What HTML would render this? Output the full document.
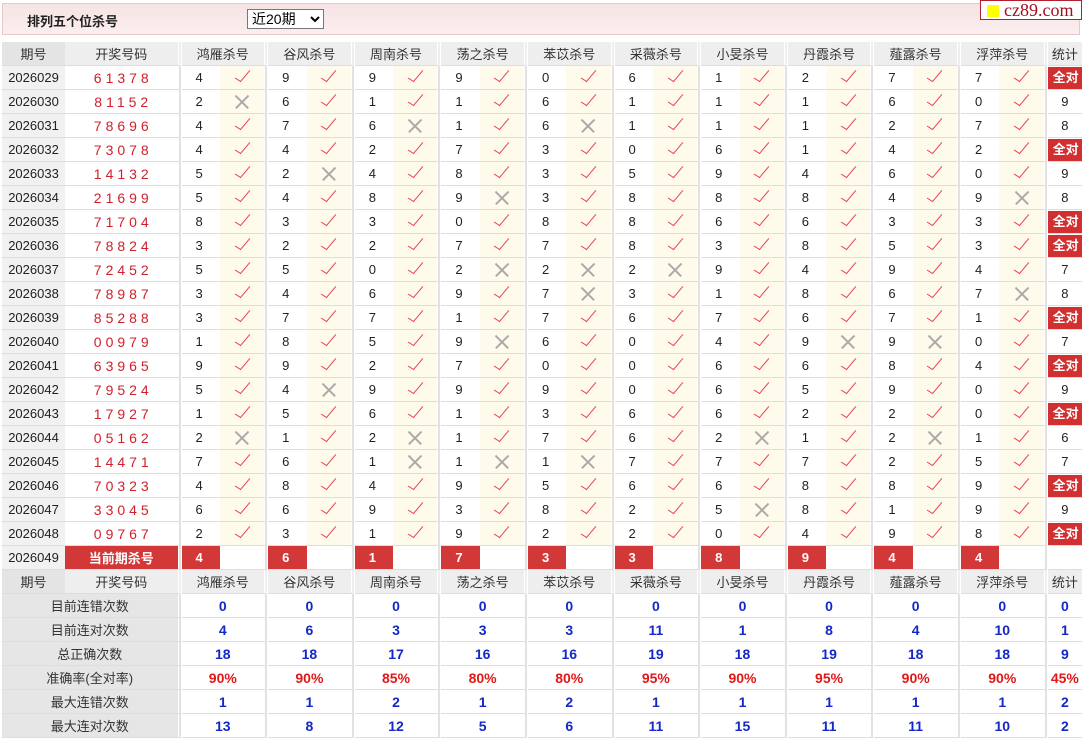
<!DOCTYPE html>
<html><head><meta charset="utf-8">
<style>
body{margin:0;background:#fff;font-family:"Liberation Sans","Noto Sans CJK SC",sans-serif;font-size:13px;color:#222;width:1085px;height:739px;overflow:hidden;position:relative}
.top{position:absolute;left:2px;top:3px;width:1078px;height:32px;background:linear-gradient(#f7e3e4,#fbeeee);border:1px solid #e8c8c8;box-sizing:border-box}
.top .t{position:absolute;left:24px;top:7px;font-weight:bold;font-size:13px}
.top select{position:absolute;left:244px;top:5px;width:77px;height:20px;font-size:14px;font-family:"Liberation Sans","Noto Sans CJK SC",sans-serif;background:#fff;border:1px solid #777}
.logo{position:absolute;left:980px;top:0;width:102px;height:20px;background:#fff;border:1px solid #b02030;box-sizing:border-box;font-family:"Liberation Serif",serif;font-size:18px;color:#a01020;line-height:18px;padding-left:23px}
.logo:before{content:"";position:absolute;left:6px;top:4px;width:12px;height:12px;background:#ff0}
table{position:absolute;left:2px;top:42px;border-collapse:collapse;table-layout:fixed;width:1080px}
td{height:23px;padding:0;border-bottom:1px solid #ddd;text-align:center;white-space:nowrap;overflow:hidden}
tr.h td{background:#eee;color:#333}
tr.h td.p{background:#e4e4e4}
td.s{background:#e2e2e2;border-bottom:none;border-left:1px solid #fff;border-right:1px solid #fff}
td.p{background:#f1f1f1}
td.n{color:#d0202c;letter-spacing:4px;font-size:14px;padding-left:4px}
td.v{text-align:left;padding-left:14px;font-size:13px}
td.k{background:#fffbec;position:relative}
b.y{display:inline-block;width:6px;height:14px;border-right:1.6px solid #ea4050;border-bottom:1.6px solid #ea4050;transform:rotate(40deg) skewY(-8deg);margin-top:-5px}
b.x{display:inline-block;position:relative;width:16px;height:16px;vertical-align:middle}
b.x:before,b.x:after{content:"";position:absolute;left:-1px;top:7px;width:18px;height:1.5px;background:#aaa;transform:rotate(45deg)}
b.x:after{transform:rotate(-45deg)}
td.st{font-size:13px}
.q{display:inline-block;background:#d23030;color:#fff;font-weight:bold;padding:0 3px;line-height:22px;width:30px}
tr.c td.r{background:#d23838;color:#fff;font-weight:bold;text-align:left;padding-left:14px}
tr.c td.rr{background:#d23838;color:#fff;font-weight:bold}
tr.m td{font-weight:bold;color:#1428c8;font-size:14px}
tr.m td.l{background:#e6e6e6;color:#333;font-weight:normal;font-size:13px}
tr.m td.rd{color:#e01818}
</style></head><body>
<div class="top"><span class="t">排列五个位杀号</span><select><option>近20期</option></select></div>
<div class="logo">cz89.com</div>
<table>
<colgroup><col style="width:63px"><col style="width:113px">
<col style="width:3px"><col style="width:39px"><col style="width:44.6px">
<col style="width:3px"><col style="width:39px"><col style="width:44.6px">
<col style="width:3px"><col style="width:39px"><col style="width:44.6px">
<col style="width:3px"><col style="width:39px"><col style="width:44.6px">
<col style="width:3px"><col style="width:39px"><col style="width:44.6px">
<col style="width:3px"><col style="width:39px"><col style="width:44.6px">
<col style="width:3px"><col style="width:39px"><col style="width:44.6px">
<col style="width:3px"><col style="width:39px"><col style="width:44.6px">
<col style="width:3px"><col style="width:39px"><col style="width:44.6px">
<col style="width:3px"><col style="width:39px"><col style="width:44.6px">
<col style="width:3px"><col style="width:35px"></colgroup>
<tr class="h"><td class="p">期号</td><td>开奖号码</td><td class="s"></td><td colspan="2">鸿雁杀号</td><td class="s"></td><td colspan="2">谷风杀号</td><td class="s"></td><td colspan="2">周南杀号</td><td class="s"></td><td colspan="2">荡之杀号</td><td class="s"></td><td colspan="2">苯苡杀号</td><td class="s"></td><td colspan="2">采薇杀号</td><td class="s"></td><td colspan="2">小旻杀号</td><td class="s"></td><td colspan="2">丹霞杀号</td><td class="s"></td><td colspan="2">薤露杀号</td><td class="s"></td><td colspan="2">浮萍杀号</td><td class="s"></td><td>统计</td></tr>
<tr><td class="p">2026029</td><td class="n">61378</td><td class="s"></td><td class="v">4</td><td class="k"><b class="y"></b></td><td class="s"></td><td class="v">9</td><td class="k"><b class="y"></b></td><td class="s"></td><td class="v">9</td><td class="k"><b class="y"></b></td><td class="s"></td><td class="v">9</td><td class="k"><b class="y"></b></td><td class="s"></td><td class="v">0</td><td class="k"><b class="y"></b></td><td class="s"></td><td class="v">6</td><td class="k"><b class="y"></b></td><td class="s"></td><td class="v">1</td><td class="k"><b class="y"></b></td><td class="s"></td><td class="v">2</td><td class="k"><b class="y"></b></td><td class="s"></td><td class="v">7</td><td class="k"><b class="y"></b></td><td class="s"></td><td class="v">7</td><td class="k"><b class="y"></b></td><td class="s"></td><td class="st"><span class="q">全对</span></td></tr>
<tr><td class="p">2026030</td><td class="n">81152</td><td class="s"></td><td class="v">2</td><td class="k"><b class="x"></b></td><td class="s"></td><td class="v">6</td><td class="k"><b class="y"></b></td><td class="s"></td><td class="v">1</td><td class="k"><b class="y"></b></td><td class="s"></td><td class="v">1</td><td class="k"><b class="y"></b></td><td class="s"></td><td class="v">6</td><td class="k"><b class="y"></b></td><td class="s"></td><td class="v">1</td><td class="k"><b class="y"></b></td><td class="s"></td><td class="v">1</td><td class="k"><b class="y"></b></td><td class="s"></td><td class="v">1</td><td class="k"><b class="y"></b></td><td class="s"></td><td class="v">6</td><td class="k"><b class="y"></b></td><td class="s"></td><td class="v">0</td><td class="k"><b class="y"></b></td><td class="s"></td><td class="st">9</td></tr>
<tr><td class="p">2026031</td><td class="n">78696</td><td class="s"></td><td class="v">4</td><td class="k"><b class="y"></b></td><td class="s"></td><td class="v">7</td><td class="k"><b class="y"></b></td><td class="s"></td><td class="v">6</td><td class="k"><b class="x"></b></td><td class="s"></td><td class="v">1</td><td class="k"><b class="y"></b></td><td class="s"></td><td class="v">6</td><td class="k"><b class="x"></b></td><td class="s"></td><td class="v">1</td><td class="k"><b class="y"></b></td><td class="s"></td><td class="v">1</td><td class="k"><b class="y"></b></td><td class="s"></td><td class="v">1</td><td class="k"><b class="y"></b></td><td class="s"></td><td class="v">2</td><td class="k"><b class="y"></b></td><td class="s"></td><td class="v">7</td><td class="k"><b class="y"></b></td><td class="s"></td><td class="st">8</td></tr>
<tr><td class="p">2026032</td><td class="n">73078</td><td class="s"></td><td class="v">4</td><td class="k"><b class="y"></b></td><td class="s"></td><td class="v">4</td><td class="k"><b class="y"></b></td><td class="s"></td><td class="v">2</td><td class="k"><b class="y"></b></td><td class="s"></td><td class="v">7</td><td class="k"><b class="y"></b></td><td class="s"></td><td class="v">3</td><td class="k"><b class="y"></b></td><td class="s"></td><td class="v">0</td><td class="k"><b class="y"></b></td><td class="s"></td><td class="v">6</td><td class="k"><b class="y"></b></td><td class="s"></td><td class="v">1</td><td class="k"><b class="y"></b></td><td class="s"></td><td class="v">4</td><td class="k"><b class="y"></b></td><td class="s"></td><td class="v">2</td><td class="k"><b class="y"></b></td><td class="s"></td><td class="st"><span class="q">全对</span></td></tr>
<tr><td class="p">2026033</td><td class="n">14132</td><td class="s"></td><td class="v">5</td><td class="k"><b class="y"></b></td><td class="s"></td><td class="v">2</td><td class="k"><b class="x"></b></td><td class="s"></td><td class="v">4</td><td class="k"><b class="y"></b></td><td class="s"></td><td class="v">8</td><td class="k"><b class="y"></b></td><td class="s"></td><td class="v">3</td><td class="k"><b class="y"></b></td><td class="s"></td><td class="v">5</td><td class="k"><b class="y"></b></td><td class="s"></td><td class="v">9</td><td class="k"><b class="y"></b></td><td class="s"></td><td class="v">4</td><td class="k"><b class="y"></b></td><td class="s"></td><td class="v">6</td><td class="k"><b class="y"></b></td><td class="s"></td><td class="v">0</td><td class="k"><b class="y"></b></td><td class="s"></td><td class="st">9</td></tr>
<tr><td class="p">2026034</td><td class="n">21699</td><td class="s"></td><td class="v">5</td><td class="k"><b class="y"></b></td><td class="s"></td><td class="v">4</td><td class="k"><b class="y"></b></td><td class="s"></td><td class="v">8</td><td class="k"><b class="y"></b></td><td class="s"></td><td class="v">9</td><td class="k"><b class="x"></b></td><td class="s"></td><td class="v">3</td><td class="k"><b class="y"></b></td><td class="s"></td><td class="v">8</td><td class="k"><b class="y"></b></td><td class="s"></td><td class="v">8</td><td class="k"><b class="y"></b></td><td class="s"></td><td class="v">8</td><td class="k"><b class="y"></b></td><td class="s"></td><td class="v">4</td><td class="k"><b class="y"></b></td><td class="s"></td><td class="v">9</td><td class="k"><b class="x"></b></td><td class="s"></td><td class="st">8</td></tr>
<tr><td class="p">2026035</td><td class="n">71704</td><td class="s"></td><td class="v">8</td><td class="k"><b class="y"></b></td><td class="s"></td><td class="v">3</td><td class="k"><b class="y"></b></td><td class="s"></td><td class="v">3</td><td class="k"><b class="y"></b></td><td class="s"></td><td class="v">0</td><td class="k"><b class="y"></b></td><td class="s"></td><td class="v">8</td><td class="k"><b class="y"></b></td><td class="s"></td><td class="v">8</td><td class="k"><b class="y"></b></td><td class="s"></td><td class="v">6</td><td class="k"><b class="y"></b></td><td class="s"></td><td class="v">6</td><td class="k"><b class="y"></b></td><td class="s"></td><td class="v">3</td><td class="k"><b class="y"></b></td><td class="s"></td><td class="v">3</td><td class="k"><b class="y"></b></td><td class="s"></td><td class="st"><span class="q">全对</span></td></tr>
<tr><td class="p">2026036</td><td class="n">78824</td><td class="s"></td><td class="v">3</td><td class="k"><b class="y"></b></td><td class="s"></td><td class="v">2</td><td class="k"><b class="y"></b></td><td class="s"></td><td class="v">2</td><td class="k"><b class="y"></b></td><td class="s"></td><td class="v">7</td><td class="k"><b class="y"></b></td><td class="s"></td><td class="v">7</td><td class="k"><b class="y"></b></td><td class="s"></td><td class="v">8</td><td class="k"><b class="y"></b></td><td class="s"></td><td class="v">3</td><td class="k"><b class="y"></b></td><td class="s"></td><td class="v">8</td><td class="k"><b class="y"></b></td><td class="s"></td><td class="v">5</td><td class="k"><b class="y"></b></td><td class="s"></td><td class="v">3</td><td class="k"><b class="y"></b></td><td class="s"></td><td class="st"><span class="q">全对</span></td></tr>
<tr><td class="p">2026037</td><td class="n">72452</td><td class="s"></td><td class="v">5</td><td class="k"><b class="y"></b></td><td class="s"></td><td class="v">5</td><td class="k"><b class="y"></b></td><td class="s"></td><td class="v">0</td><td class="k"><b class="y"></b></td><td class="s"></td><td class="v">2</td><td class="k"><b class="x"></b></td><td class="s"></td><td class="v">2</td><td class="k"><b class="x"></b></td><td class="s"></td><td class="v">2</td><td class="k"><b class="x"></b></td><td class="s"></td><td class="v">9</td><td class="k"><b class="y"></b></td><td class="s"></td><td class="v">4</td><td class="k"><b class="y"></b></td><td class="s"></td><td class="v">9</td><td class="k"><b class="y"></b></td><td class="s"></td><td class="v">4</td><td class="k"><b class="y"></b></td><td class="s"></td><td class="st">7</td></tr>
<tr><td class="p">2026038</td><td class="n">78987</td><td class="s"></td><td class="v">3</td><td class="k"><b class="y"></b></td><td class="s"></td><td class="v">4</td><td class="k"><b class="y"></b></td><td class="s"></td><td class="v">6</td><td class="k"><b class="y"></b></td><td class="s"></td><td class="v">9</td><td class="k"><b class="y"></b></td><td class="s"></td><td class="v">7</td><td class="k"><b class="x"></b></td><td class="s"></td><td class="v">3</td><td class="k"><b class="y"></b></td><td class="s"></td><td class="v">1</td><td class="k"><b class="y"></b></td><td class="s"></td><td class="v">8</td><td class="k"><b class="y"></b></td><td class="s"></td><td class="v">6</td><td class="k"><b class="y"></b></td><td class="s"></td><td class="v">7</td><td class="k"><b class="x"></b></td><td class="s"></td><td class="st">8</td></tr>
<tr><td class="p">2026039</td><td class="n">85288</td><td class="s"></td><td class="v">3</td><td class="k"><b class="y"></b></td><td class="s"></td><td class="v">7</td><td class="k"><b class="y"></b></td><td class="s"></td><td class="v">7</td><td class="k"><b class="y"></b></td><td class="s"></td><td class="v">1</td><td class="k"><b class="y"></b></td><td class="s"></td><td class="v">7</td><td class="k"><b class="y"></b></td><td class="s"></td><td class="v">6</td><td class="k"><b class="y"></b></td><td class="s"></td><td class="v">7</td><td class="k"><b class="y"></b></td><td class="s"></td><td class="v">6</td><td class="k"><b class="y"></b></td><td class="s"></td><td class="v">7</td><td class="k"><b class="y"></b></td><td class="s"></td><td class="v">1</td><td class="k"><b class="y"></b></td><td class="s"></td><td class="st"><span class="q">全对</span></td></tr>
<tr><td class="p">2026040</td><td class="n">00979</td><td class="s"></td><td class="v">1</td><td class="k"><b class="y"></b></td><td class="s"></td><td class="v">8</td><td class="k"><b class="y"></b></td><td class="s"></td><td class="v">5</td><td class="k"><b class="y"></b></td><td class="s"></td><td class="v">9</td><td class="k"><b class="x"></b></td><td class="s"></td><td class="v">6</td><td class="k"><b class="y"></b></td><td class="s"></td><td class="v">0</td><td class="k"><b class="y"></b></td><td class="s"></td><td class="v">4</td><td class="k"><b class="y"></b></td><td class="s"></td><td class="v">9</td><td class="k"><b class="x"></b></td><td class="s"></td><td class="v">9</td><td class="k"><b class="x"></b></td><td class="s"></td><td class="v">0</td><td class="k"><b class="y"></b></td><td class="s"></td><td class="st">7</td></tr>
<tr><td class="p">2026041</td><td class="n">63965</td><td class="s"></td><td class="v">9</td><td class="k"><b class="y"></b></td><td class="s"></td><td class="v">9</td><td class="k"><b class="y"></b></td><td class="s"></td><td class="v">2</td><td class="k"><b class="y"></b></td><td class="s"></td><td class="v">7</td><td class="k"><b class="y"></b></td><td class="s"></td><td class="v">0</td><td class="k"><b class="y"></b></td><td class="s"></td><td class="v">0</td><td class="k"><b class="y"></b></td><td class="s"></td><td class="v">6</td><td class="k"><b class="y"></b></td><td class="s"></td><td class="v">6</td><td class="k"><b class="y"></b></td><td class="s"></td><td class="v">8</td><td class="k"><b class="y"></b></td><td class="s"></td><td class="v">4</td><td class="k"><b class="y"></b></td><td class="s"></td><td class="st"><span class="q">全对</span></td></tr>
<tr><td class="p">2026042</td><td class="n">79524</td><td class="s"></td><td class="v">5</td><td class="k"><b class="y"></b></td><td class="s"></td><td class="v">4</td><td class="k"><b class="x"></b></td><td class="s"></td><td class="v">9</td><td class="k"><b class="y"></b></td><td class="s"></td><td class="v">9</td><td class="k"><b class="y"></b></td><td class="s"></td><td class="v">9</td><td class="k"><b class="y"></b></td><td class="s"></td><td class="v">0</td><td class="k"><b class="y"></b></td><td class="s"></td><td class="v">6</td><td class="k"><b class="y"></b></td><td class="s"></td><td class="v">5</td><td class="k"><b class="y"></b></td><td class="s"></td><td class="v">9</td><td class="k"><b class="y"></b></td><td class="s"></td><td class="v">0</td><td class="k"><b class="y"></b></td><td class="s"></td><td class="st">9</td></tr>
<tr><td class="p">2026043</td><td class="n">17927</td><td class="s"></td><td class="v">1</td><td class="k"><b class="y"></b></td><td class="s"></td><td class="v">5</td><td class="k"><b class="y"></b></td><td class="s"></td><td class="v">6</td><td class="k"><b class="y"></b></td><td class="s"></td><td class="v">1</td><td class="k"><b class="y"></b></td><td class="s"></td><td class="v">3</td><td class="k"><b class="y"></b></td><td class="s"></td><td class="v">6</td><td class="k"><b class="y"></b></td><td class="s"></td><td class="v">6</td><td class="k"><b class="y"></b></td><td class="s"></td><td class="v">2</td><td class="k"><b class="y"></b></td><td class="s"></td><td class="v">2</td><td class="k"><b class="y"></b></td><td class="s"></td><td class="v">0</td><td class="k"><b class="y"></b></td><td class="s"></td><td class="st"><span class="q">全对</span></td></tr>
<tr><td class="p">2026044</td><td class="n">05162</td><td class="s"></td><td class="v">2</td><td class="k"><b class="x"></b></td><td class="s"></td><td class="v">1</td><td class="k"><b class="y"></b></td><td class="s"></td><td class="v">2</td><td class="k"><b class="x"></b></td><td class="s"></td><td class="v">1</td><td class="k"><b class="y"></b></td><td class="s"></td><td class="v">7</td><td class="k"><b class="y"></b></td><td class="s"></td><td class="v">6</td><td class="k"><b class="y"></b></td><td class="s"></td><td class="v">2</td><td class="k"><b class="x"></b></td><td class="s"></td><td class="v">1</td><td class="k"><b class="y"></b></td><td class="s"></td><td class="v">2</td><td class="k"><b class="x"></b></td><td class="s"></td><td class="v">1</td><td class="k"><b class="y"></b></td><td class="s"></td><td class="st">6</td></tr>
<tr><td class="p">2026045</td><td class="n">14471</td><td class="s"></td><td class="v">7</td><td class="k"><b class="y"></b></td><td class="s"></td><td class="v">6</td><td class="k"><b class="y"></b></td><td class="s"></td><td class="v">1</td><td class="k"><b class="x"></b></td><td class="s"></td><td class="v">1</td><td class="k"><b class="x"></b></td><td class="s"></td><td class="v">1</td><td class="k"><b class="x"></b></td><td class="s"></td><td class="v">7</td><td class="k"><b class="y"></b></td><td class="s"></td><td class="v">7</td><td class="k"><b class="y"></b></td><td class="s"></td><td class="v">7</td><td class="k"><b class="y"></b></td><td class="s"></td><td class="v">2</td><td class="k"><b class="y"></b></td><td class="s"></td><td class="v">5</td><td class="k"><b class="y"></b></td><td class="s"></td><td class="st">7</td></tr>
<tr><td class="p">2026046</td><td class="n">70323</td><td class="s"></td><td class="v">4</td><td class="k"><b class="y"></b></td><td class="s"></td><td class="v">8</td><td class="k"><b class="y"></b></td><td class="s"></td><td class="v">4</td><td class="k"><b class="y"></b></td><td class="s"></td><td class="v">9</td><td class="k"><b class="y"></b></td><td class="s"></td><td class="v">5</td><td class="k"><b class="y"></b></td><td class="s"></td><td class="v">6</td><td class="k"><b class="y"></b></td><td class="s"></td><td class="v">6</td><td class="k"><b class="y"></b></td><td class="s"></td><td class="v">8</td><td class="k"><b class="y"></b></td><td class="s"></td><td class="v">8</td><td class="k"><b class="y"></b></td><td class="s"></td><td class="v">9</td><td class="k"><b class="y"></b></td><td class="s"></td><td class="st"><span class="q">全对</span></td></tr>
<tr><td class="p">2026047</td><td class="n">33045</td><td class="s"></td><td class="v">6</td><td class="k"><b class="y"></b></td><td class="s"></td><td class="v">6</td><td class="k"><b class="y"></b></td><td class="s"></td><td class="v">9</td><td class="k"><b class="y"></b></td><td class="s"></td><td class="v">3</td><td class="k"><b class="y"></b></td><td class="s"></td><td class="v">8</td><td class="k"><b class="y"></b></td><td class="s"></td><td class="v">2</td><td class="k"><b class="y"></b></td><td class="s"></td><td class="v">5</td><td class="k"><b class="x"></b></td><td class="s"></td><td class="v">8</td><td class="k"><b class="y"></b></td><td class="s"></td><td class="v">1</td><td class="k"><b class="y"></b></td><td class="s"></td><td class="v">9</td><td class="k"><b class="y"></b></td><td class="s"></td><td class="st">9</td></tr>
<tr><td class="p">2026048</td><td class="n">09767</td><td class="s"></td><td class="v">2</td><td class="k"><b class="y"></b></td><td class="s"></td><td class="v">3</td><td class="k"><b class="y"></b></td><td class="s"></td><td class="v">1</td><td class="k"><b class="y"></b></td><td class="s"></td><td class="v">9</td><td class="k"><b class="y"></b></td><td class="s"></td><td class="v">2</td><td class="k"><b class="y"></b></td><td class="s"></td><td class="v">2</td><td class="k"><b class="y"></b></td><td class="s"></td><td class="v">0</td><td class="k"><b class="y"></b></td><td class="s"></td><td class="v">4</td><td class="k"><b class="y"></b></td><td class="s"></td><td class="v">9</td><td class="k"><b class="y"></b></td><td class="s"></td><td class="v">8</td><td class="k"><b class="y"></b></td><td class="s"></td><td class="st"><span class="q">全对</span></td></tr>
<tr class="c"><td class="p">2026049</td><td class="rr">当前期杀号</td><td class="s"></td><td class="r">4</td><td></td><td class="s"></td><td class="r">6</td><td></td><td class="s"></td><td class="r">1</td><td></td><td class="s"></td><td class="r">7</td><td></td><td class="s"></td><td class="r">3</td><td></td><td class="s"></td><td class="r">3</td><td></td><td class="s"></td><td class="r">8</td><td></td><td class="s"></td><td class="r">9</td><td></td><td class="s"></td><td class="r">4</td><td></td><td class="s"></td><td class="r">4</td><td></td><td class="s"></td><td></td></tr>
<tr class="h"><td class="p">期号</td><td>开奖号码</td><td class="s"></td><td colspan="2">鸿雁杀号</td><td class="s"></td><td colspan="2">谷风杀号</td><td class="s"></td><td colspan="2">周南杀号</td><td class="s"></td><td colspan="2">荡之杀号</td><td class="s"></td><td colspan="2">苯苡杀号</td><td class="s"></td><td colspan="2">采薇杀号</td><td class="s"></td><td colspan="2">小旻杀号</td><td class="s"></td><td colspan="2">丹霞杀号</td><td class="s"></td><td colspan="2">薤露杀号</td><td class="s"></td><td colspan="2">浮萍杀号</td><td class="s"></td><td>统计</td></tr>
<tr class="m"><td class="l" colspan="2">目前连错次数</td><td class="s"></td><td colspan="2">0</td><td class="s"></td><td colspan="2">0</td><td class="s"></td><td colspan="2">0</td><td class="s"></td><td colspan="2">0</td><td class="s"></td><td colspan="2">0</td><td class="s"></td><td colspan="2">0</td><td class="s"></td><td colspan="2">0</td><td class="s"></td><td colspan="2">0</td><td class="s"></td><td colspan="2">0</td><td class="s"></td><td colspan="2">0</td><td class="s"></td><td>0</td></tr>
<tr class="m"><td class="l" colspan="2">目前连对次数</td><td class="s"></td><td colspan="2">4</td><td class="s"></td><td colspan="2">6</td><td class="s"></td><td colspan="2">3</td><td class="s"></td><td colspan="2">3</td><td class="s"></td><td colspan="2">3</td><td class="s"></td><td colspan="2">11</td><td class="s"></td><td colspan="2">1</td><td class="s"></td><td colspan="2">8</td><td class="s"></td><td colspan="2">4</td><td class="s"></td><td colspan="2">10</td><td class="s"></td><td>1</td></tr>
<tr class="m"><td class="l" colspan="2">总正确次数</td><td class="s"></td><td colspan="2">18</td><td class="s"></td><td colspan="2">18</td><td class="s"></td><td colspan="2">17</td><td class="s"></td><td colspan="2">16</td><td class="s"></td><td colspan="2">16</td><td class="s"></td><td colspan="2">19</td><td class="s"></td><td colspan="2">18</td><td class="s"></td><td colspan="2">19</td><td class="s"></td><td colspan="2">18</td><td class="s"></td><td colspan="2">18</td><td class="s"></td><td>9</td></tr>
<tr class="m"><td class="l" colspan="2">准确率(全对率)</td><td class="s"></td><td class="rd" colspan="2">90%</td><td class="s"></td><td class="rd" colspan="2">90%</td><td class="s"></td><td class="rd" colspan="2">85%</td><td class="s"></td><td class="rd" colspan="2">80%</td><td class="s"></td><td class="rd" colspan="2">80%</td><td class="s"></td><td class="rd" colspan="2">95%</td><td class="s"></td><td class="rd" colspan="2">90%</td><td class="s"></td><td class="rd" colspan="2">95%</td><td class="s"></td><td class="rd" colspan="2">90%</td><td class="s"></td><td class="rd" colspan="2">90%</td><td class="s"></td><td class="rd">45%</td></tr>
<tr class="m"><td class="l" colspan="2">最大连错次数</td><td class="s"></td><td colspan="2">1</td><td class="s"></td><td colspan="2">1</td><td class="s"></td><td colspan="2">2</td><td class="s"></td><td colspan="2">1</td><td class="s"></td><td colspan="2">2</td><td class="s"></td><td colspan="2">1</td><td class="s"></td><td colspan="2">1</td><td class="s"></td><td colspan="2">1</td><td class="s"></td><td colspan="2">1</td><td class="s"></td><td colspan="2">1</td><td class="s"></td><td>2</td></tr>
<tr class="m"><td class="l" colspan="2">最大连对次数</td><td class="s"></td><td colspan="2">13</td><td class="s"></td><td colspan="2">8</td><td class="s"></td><td colspan="2">12</td><td class="s"></td><td colspan="2">5</td><td class="s"></td><td colspan="2">6</td><td class="s"></td><td colspan="2">11</td><td class="s"></td><td colspan="2">15</td><td class="s"></td><td colspan="2">11</td><td class="s"></td><td colspan="2">11</td><td class="s"></td><td colspan="2">10</td><td class="s"></td><td>2</td></tr>
</table>
</body></html>
